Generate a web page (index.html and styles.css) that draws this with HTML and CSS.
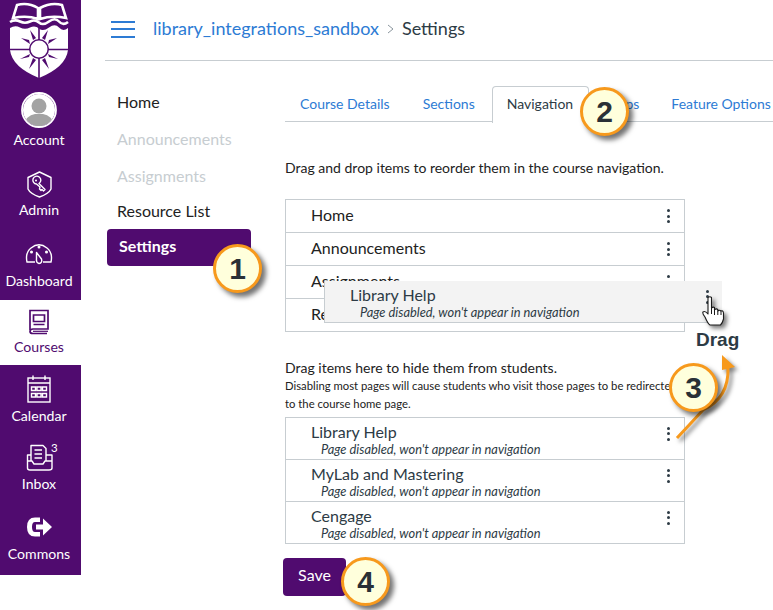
FILE: index.html
```html
<!DOCTYPE html>
<html lang="en">
<head>
<meta charset="utf-8">
<title>Settings</title>
<link rel="stylesheet" href="styles.css">
</head>
<body>
<div class="app">
  <nav class="side">
    <div class="logo">
      <svg width="81" height="83" viewBox="0 0 81 83">
        <path d="M17 5 Q28 2 38 8 L38 19 Q27 15 13 18 Z M40 8 Q51 2 62 5 L66 18 Q52 15 40 19 Z" fill="none" stroke="#fff" stroke-width="2.6"/>
        <path d="M10 22 Q15 19 20 21.5 T30 21.5 T39 22.5 T49 21.5 T59 21.5 T68 22" fill="none" stroke="#fff" stroke-width="2.6"/>
        <path d="M10 28 Q15 25 20 27.5 T30 27.5 T39 28.5 T49 27.5 T59 27.5 T68 28 L68 50 Q66 67 39 78 Q12 67 10 50 Z" fill="#fff"/>
        <g fill="#500b6f">
          <path d="M38.2 28 h1.6 v50 h-1.6z M10 48.8 h58 v1.4 h-58z"/>
          <path d="M33 40 L30 30 L36 38 Z M45 40 L48 30 L42 38 Z M30 44 L21 38 L29 40 Z M48 44 L57 38 L49 40 Z M30 54 L20 59 L29 57 Z M48 54 L58 59 L49 57 Z M33 58 L29 69 L36 60 Z M45 58 L49 69 L42 60 Z"/>
          <circle cx="39" cy="49" r="10"/>
        </g>
        <circle cx="39" cy="49" r="8.5" fill="#fff"/>
      </svg>
    </div>
    <a class="item account">
      <svg class="ic36" viewBox="0 0 36 36">
        <defs><clipPath id="av"><circle cx="18" cy="18" r="16"/></clipPath></defs>
        <g clip-path="url(#av)"><rect width="36" height="36" fill="#fff"/><circle cx="18" cy="14" r="7.5" fill="#a3a3a3"/><path d="M3 34 Q5 23 14 22 H22 Q31 23 33 34Z" fill="#a3a3a3"/><rect y="30" width="36" height="6" fill="#a3a3a3"/></g>
        <circle cx="18" cy="18" r="17" fill="none" stroke="#fff" stroke-width="1.8"/>
      </svg>
      <span>Account</span>
    </a>
    <a class="item admin">
      <svg class="ic30" viewBox="0 0 30 30" fill="none" stroke="#fff" stroke-width="1.4" stroke-linejoin="round">
        <path d="M15.5 4 L27 9.5 V21 Q25 25.5 15.5 29 Q6 25.5 4 21 V9.5 Z"/>
        <path d="M9 11 A4 4 0 1 1 15 15.5 L21 21.5 L19.5 23 L18 21.5 L17 22.5 L15.5 21 L16 19 L12.5 16 A4 4 0 0 1 9 11 Z"/>
        <circle cx="12" cy="12.5" r="1" fill="#fff" stroke="none"/>
      </svg>
      <span>Admin</span>
    </a>
    <a class="item dash">
      <svg class="ic30" viewBox="0 0 30 30" fill="none" stroke="#fff" stroke-width="1.4" stroke-linejoin="round">
        <path d="M11 23 H3 Q1 14 7 9 Q15 2.5 23 9 Q29 14 27 23 H19"/>
        <path d="M12.5 13.5 L17.5 20 Q18.5 24 15 24.5 Q12 24 12.5 20 Z"/>
        <circle cx="15" cy="8" r=".8" fill="#fff"/><circle cx="7.5" cy="13" r=".8" fill="#fff"/><circle cx="22.5" cy="13" r=".8" fill="#fff"/>
      </svg>
      <span>Dashboard</span>
    </a>
    <a class="item courses active">
      <svg class="ic26" viewBox="0 0 26 26" fill="none" stroke="#500b6f" stroke-width="1.7">
        <path d="M4 21 V1.5 H22 V20 H7 Q4 20 4 22.5 Q4 24.5 7 24.5 H21"/>
        <path d="M7.5 6 H18.5 V12.5 H7.5 Z M7.5 15.5 H18.5"/>
        <path d="M7 22.3 H22" stroke-width="1.2"/>
      </svg>
      <span>Courses</span>
    </a>
    <a class="item calendar">
      <svg class="ic30" viewBox="0 0 30 30" fill="none" stroke="#fff" stroke-width="1.4">
        <rect x="4" y="4" width="22" height="24"/>
        <path d="M4 9 H26 M9 1.5 V6 M21 1.5 V6"/>
        <path d="M7.5 13 h4 v3.5 h-4z M13 13 h4 v3.5 h-4z M18.5 13 h4 v3.5 h-4z M7.5 19.5 h4 v3.5 h-4z M13 19.5 h4 v3.5 h-4z M18.5 19.5 h4 v3.5 h-4z"/>
      </svg>
      <span>Calendar</span>
    </a>
    <a class="item inbox">
      <span class="inbox-icon">
        <svg class="ic28" viewBox="0 0 28 28" fill="none" stroke="#fff" stroke-width="1.4" stroke-linejoin="round">
          <path d="M6 17 V1.5 H18 L21 4.5 V17"/>
          <path d="M9.5 6 H17 M9.5 10 H17 M9.5 14 H17" stroke-width="1.6"/>
          <path d="M6 11 H2.5 V24 Q2.5 26 5 26 H24 Q27 26 27 24 V11 H21 M2.5 17 H7 L9 20 H18 L20 17 H27"/>
        </svg>
        <sup class="badge">3</sup>
      </span>
      <span>Inbox</span>
    </a>
    <a class="item commons">
      <svg class="ic30" viewBox="0 0 30 30">
        <path d="M16 5.5 H11 Q3 5.5 3 15 Q3 24.5 11 24.5 H16 V20 H11 Q8 20 8 15 Q8 10 11 10 H16 Z" fill="#fff"/>
        <path d="M12 12.5 H19 V6.5 L28 15 L19 23.5 V17.5 H12 Z" fill="#fff"/>
      </svg>
      <span>Commons</span>
    </a>
  </nav>

  <div class="main">
    <header class="top">
      <span class="burger"><i></i><i></i><i></i></span>
      <a class="crumb">library_integrations_sandbox</a>
      <svg class="chev" width="7" height="10" viewBox="0 0 7 10" fill="none" stroke="#8b969e" stroke-width="1"><path d="M1 1 L6 5 L1 9"/></svg>
      <span class="here">Settings</span>
    </header>
    <div class="body">
      <ul class="menu">
        <li>Home</li>
        <li class="off">Announcements</li>
        <li class="off">Assignments</li>
        <li class="tight">Resource List</li>
        <li class="sel">Settings</li>
      </ul>
      <section class="panel">
        <div class="tabs">
          <a class="tab">Course Details</a>
          <a class="tab">Sections</a>
          <a class="tab cur">Navigation</a>
          <a class="tab">Apps</a>
          <a class="tab">Feature Options</a>
        </div>
        <p class="lead">Drag and drop items to reorder them in the course navigation.</p>
        <ul class="list on">
          <li class="row"><span>Home</span><span class="kebab"><i></i><i></i><i></i></span></li>
          <li class="row"><span>Announcements</span><span class="kebab"><i></i><i></i><i></i></span></li>
          <li class="row"><span>Assignments</span><span class="kebab"><i></i><i></i><i></i></span></li>
          <li class="row"><span>Resource List</span><span class="kebab"><i></i><i></i><i></i></span></li>
        </ul>
        <p class="hide-title">Drag items here to hide them from students.</p>
        <p class="hide-note">Disabling most pages will cause students who visit those pages to be redirected<br>to the course home page.</p>
        <ul class="list dis">
          <li class="row"><div><div class="name">Library Help</div><em>Page disabled, won't appear in navigation</em></div><span class="kebab"><i></i><i></i><i></i></span></li>
          <li class="row"><div><div class="name">MyLab and Mastering</div><em>Page disabled, won't appear in navigation</em></div><span class="kebab"><i></i><i></i><i></i></span></li>
          <li class="row"><div><div class="name">Cengage</div><em>Page disabled, won't appear in navigation</em></div><span class="kebab"><i></i><i></i><i></i></span></li>
        </ul>
        <button class="save">Save</button>
      </section>
    </div>
  </div>
</div>

<div class="ghost"><div><div class="name">Library Help</div><em>Page disabled, won't appear in navigation</em></div><span class="kebab"><i></i><i></i><i></i></span></div>

<svg class="hand" width="30" height="34" viewBox="0 0 30 34">
  <path d="M6 2.5 Q8 1 9.5 2.5 V13 Q11 11.5 12.5 12.5 V15 Q14 13 15.8 14.5 V16 Q17.5 14.5 19 16 Q21 15 21.5 18 V24 Q20.5 28 18.5 30 H8 Q6 29 3 22 Q0 18 1 17 Q3 15.5 6 19 Z" fill="#fff" stroke="#1a1a1a" stroke-width="1.1" stroke-linejoin="round"/>
  <path d="M9.5 13 V19 M12.5 15 V20 M15.8 16 V20 M19 16 V20" stroke="#1a1a1a" stroke-width="1" fill="none"/>
</svg>
<div class="drag">Drag</div>

<svg class="arrow" width="80" height="95" viewBox="0 0 80 95">
  <path d="M5 85 Q20 69 31 57 Q57 45 56 15" fill="none" stroke="#f7991c" stroke-width="3"/>
  <path d="M50 2 L63 14 L50 17 Z" fill="#f7991c"/>
</svg>

<div class="call c1">1</div>
<div class="call c2">2</div>
<div class="call c3">3</div>
<div class="call c4">4</div>
</body>
</html>
```
FILE: styles.css
```css
* { box-sizing: border-box; }
html, body { margin: 0; height: 100%; }
body {
  width: 773px; height: 610px; overflow: hidden; position: relative; background: #fff;
  font-family: Lato, "Liberation Sans", sans-serif; color: #2d3b45;
}
ul { list-style: none; margin: 0; padding: 0; }
p { margin: 0; }
.app { display: flex; align-items: flex-start; }

.side { width: 81px; height: 575px; flex: none; background: #500b6f; }
.logo { height: 83px; overflow: hidden; }
.logo svg { display: block; }
.item { display: flex; flex-direction: column; align-items: center; gap: 3px; padding: 9px 3px 0 0; color: #fff; font-size: 14.1px; line-height: 18px; white-space: nowrap; }
.item svg { display: block; }
.ic36 { width: 36px; height: 36px; }
.ic30 { width: 30px; height: 30px; }
.ic28 { width: 28px; height: 28px; }
.ic26 { width: 26px; height: 26px; }
.account { height: 76px; }
.admin { height: 71px; }
.dash { height: 70px; }
.courses { height: 65px; }
.calendar { height: 70px; }
.inbox { height: 68px; }
.commons { height: 72px; }
.active { background: #fff; color: #500b6f; }
.inbox-icon { position: relative; display: block; }
.badge { position: absolute; left: 26px; top: -3px; font-size: 11.5px; line-height: 14px; }

.main { flex: 1; min-width: 0; margin-left: 24px; }
.top { height: 61px; border-bottom: 1px solid #c7cdd1; display: flex; align-items: center; padding: 0 0 4px 6px; font-size: 18px; }
.burger { display: flex; flex-direction: column; gap: 5.5px; width: 24px; margin: 2px 18px 0 0; }
.burger i { display: block; height: 2px; background: #2d7bd4; }
.crumb { color: #2d7bd4; }
.chev { margin: 2px 8px 0 8px; }
.here { color: #2d3b45; }

.body { display: flex; align-items: flex-start; }
.menu { width: 180px; flex: none; padding: 22px 0 0 2px; font-size: 16px; }
.menu li { height: 37px; line-height: 37px; padding-left: 10px; color: #222; }
.menu .off { color: #c7cdd1; }
.menu .tight { margin-top: -2px; }
.menu .sel { width: 144px; background: #500b6f; color: #fff; font-weight: 700; border-radius: 4px; padding-left: 12px; line-height: 34px; }

.panel { flex: 1; min-width: 0; }
.tabs { display: flex; height: 61px; padding-top: 25px; border-bottom: 1px solid #c7cdd1; font-size: 14px; white-space: nowrap; }
.tab { height: 36px; line-height: 34px; padding: 0 15px; color: #2d7bd4; border: 1px solid transparent; border-bottom: 0; border-radius: 4px 4px 0 0; }
.tab:first-child { padding: 0 16px 0 14px; }
.cur { color: #2d3b45; border-color: #c7cdd1; background: #fff; height: 37px; margin: 0 3px 0 1px; padding: 0 15px 0 14px; }
.lead { font-size: 14px; line-height: 20px; margin-top: 36px; color: #222; }
.list { width: 400px; border: 1px solid #c7cdd1; }
.on { margin-top: 21px; height: 133px; }
.row { display: flex; align-items: center; justify-content: space-between; padding: 0 14px 0 25px; }
.row + .row { border-top: 1px solid #c7cdd1; }
.on .row { height: 33px; padding-bottom: 4px; font-size: 16px; color: #222; }
.on .row:first-child { height: 32px; }
.on .kebab { margin-top: 4px; }
.hide-title { font-size: 14px; line-height: 18px; margin-top: 27px; color: #222; }
.hide-note { font-size: 11.3px; line-height: 18px; color: #222; white-space: nowrap; }
.dis { margin-top: 4px; height: 127px; }
.dis .row { height: 42px; padding-top: 4px; }
.dis .row:first-child { height: 41px; }
.name { font-size: 16px; line-height: 17px; color: #2d3b45; }
em { display: block; font-size: 12.85px; line-height: 17px; padding: 1px 0 0 10px; color: #2d3b45; font-style: italic; }
.kebab { display: flex; flex-direction: column; gap: 2.5px; width: 3px; flex: none; }
.kebab i { display: block; width: 3px; height: 3px; border-radius: 50%; background: #2d3b45; }
.dis .kebab, .ghost .kebab { margin-bottom: 14px; }
.save { display: block; width: 63px; height: 38px; margin: 14px 0 0 -2px; padding: 0 0 5px; border: 0; border-radius: 4px; background: #500b6f; color: #fff; font: 16px Lato, sans-serif; }

.ghost { position: absolute; left: 324px; top: 281px; width: 398px; height: 42px; background: #f3f3f3; border-bottom: 1px solid #c7cdd1; border-left: 1px solid #c7cdd1; display: flex; align-items: center; justify-content: space-between; padding: 4px 13px 0 25px; }
.hand { position: absolute; left: 702px; top: 295px; filter: drop-shadow(3px 3px 2px rgba(0,0,0,.5)); }
.drag { position: absolute; left: 696px; top: 329px; font: 700 19px/22px "Liberation Sans", sans-serif; color: #2d3b45; }
.arrow { position: absolute; left: 672px; top: 353px; filter: drop-shadow(3px 3px 2px rgba(0,0,0,.5)); }
.call {
  position: absolute; width: 49px; height: 49px; border-radius: 50%;
  background: #ffffdc; border: 3px solid #f7991c; box-shadow: 4px 4px 5px rgba(0,0,0,.55);
  font: 700 30px/43px "Liberation Sans", sans-serif; text-align: center; color: #2a3036;
}
.c1 { left: 213px; top: 244px; }
.c2 { left: 580px; top: 87px; }
.c3 { left: 669px; top: 363px; }
.c4 { left: 341px; top: 557px; }
```
